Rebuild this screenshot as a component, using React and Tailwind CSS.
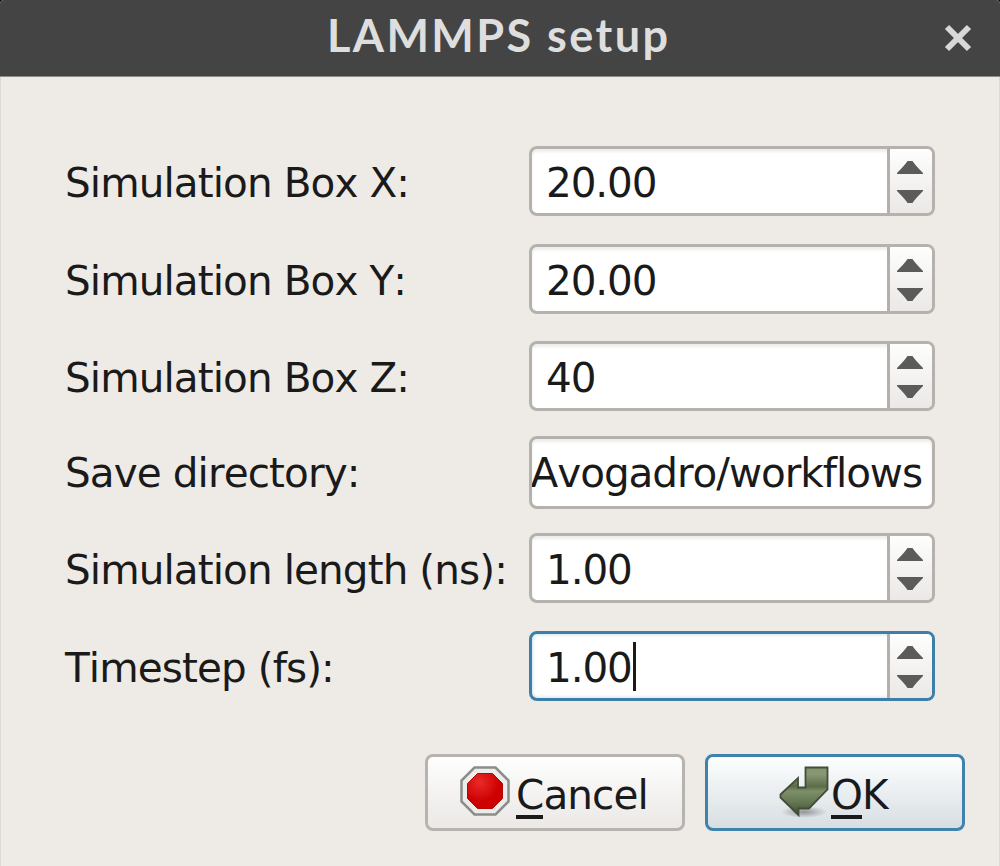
import React from "react";

function Arrows() {
  return (
    <div className="flex w-[45px] shrink-0 flex-col items-center justify-center gap-[16px] border-l-[3px] border-[#b4afaa] bg-linear-to-b from-[#fefefe] to-[#ebe8e6] pt-[2px] pr-[3px]">
      <svg className="block h-[13px] w-[26px]" viewBox="0 0 26 13">
        <path d="M10.500 0h5Q18 4 26 12v1H0v-1Q8 4 10.500 0z" fill="#5b5b5a" />
      </svg>
      <svg className="block h-[13px] w-[26px]" viewBox="0 0 26 13">
        <path d="M10.500 13h5Q18 9 26 1V0H0v1Q8 9 10.500 13z" fill="#5b5b5a" />
      </svg>
    </div>
  );
}

function SpinBox({ value, focused }) {
  return (
    <div
      className={
        "flex h-[70px] w-[406px] overflow-hidden rounded-[8px] border-[3px] bg-white " +
        (focused
          ? "border-[#3d7fa8] shadow-[inset_0_0_4px_#b9d6e6]"
          : "border-[#b5b1ac] shadow-[inset_0_3px_3px_#eeeeee]")
      }
    >
      <div className="flex flex-1 items-center pl-[14px]">
        <span className="relative top-[2px] tracking-[-1.1px] whitespace-nowrap">{value}</span>
        {focused && <span className="ml-[1px] h-[49px] w-[3px] bg-[#1a1a1a]" />}
      </div>
      <Arrows />
    </div>
  );
}

function Row({ label, className, labelClassName = "pt-[4px]", children }) {
  return (
    <div className={"flex items-center justify-between " + className}>
      <span className={"whitespace-nowrap " + labelClassName}>{label}</span>
      {children}
    </div>
  );
}

function StopIcon() {
  return (
    <svg className="block h-[50px] w-[50px]" viewBox="0 0 50 50">
      <defs>
        <radialGradient id="stop" cx="0.35" cy="0.25" r="0.8">
          <stop offset="0" stopColor="#ea2a2a" />
          <stop offset="0.7" stopColor="#cc0000" />
        </radialGradient>
      </defs>
      <path d="M14.500 1.500h21l13 13v21l-13 13h-21l-13-13v-21z" fill="#ececea" stroke="#8b8d89" strokeWidth="2.500" />
      <path d="M17.500 7.500h15l10 10v15l-10 10h-15l-10-10v-15z" fill="url(#stop)" stroke="#b40808" strokeWidth="1" />
    </svg>
  );
}

function ReturnIcon() {
  return (
    <svg className="block h-[52px] w-[52px]" viewBox="0 0 52 52">
      <defs>
        <linearGradient id="ret" x1="0" y1="0" x2="0" y2="1">
          <stop offset="0" stopColor="#879773" />
          <stop offset="0.15" stopColor="#879773" />
          <stop offset="0.4" stopColor="#5b6d4c" />
          <stop offset="0.5" stopColor="#7e9068" />
          <stop offset="0.75" stopColor="#617451" />
          <stop offset="1" stopColor="#3c4d30" />
        </linearGradient>
        <radialGradient id="shade">
          <stop offset="0" stopColor="#000" stopOpacity="0.35" />
          <stop offset="1" stopColor="#000" stopOpacity="0" />
        </radialGradient>
      </defs>
      <ellipse cx="25" cy="46" rx="23" ry="6" fill="url(#shade)" />
      <path d="M26.500 1.500h22v22L30 42.500H19.500V49L1.500 31.500v-3L19 12v9.500h7.500z" fill="url(#ret)" stroke="#434d3a" strokeWidth="1.800" />
    </svg>
  );
}

export default function App() {
  return (
    <div className="h-[866px] w-[1000px] overflow-hidden bg-black">
      <div className="flex h-full w-full flex-col overflow-hidden rounded-t-[4px] bg-[#eeebe6] font-['DejaVu_Sans',sans-serif] text-[40.5px] leading-[48px] tracking-[-0.9px] text-[#1a1a1a] [font-kerning:none]">
        <header className="flex h-[77px] items-center justify-between border-b border-[#8c8b89] bg-[#444444] pr-[28px] pl-[327px]">
          <h1 className="relative top-[-3px] font-['Lato',sans-serif] text-[45px] font-bold tracking-[2.4px] whitespace-nowrap text-[#dedede]">
            LAMMPS setup
          </h1>
          <svg className="block h-[28px] w-[28px]" viewBox="0 0 28 28">
            <path d="M3 3l22 22M25 3L3 25" stroke="#d8d8d8" strokeWidth="6" />
          </svg>
        </header>
        <main className="flex flex-1 flex-col border-x border-[#dddad5] pt-[69px] pr-[64px] pl-[64px]">
          <Row label="Simulation Box X:" className="mb-[28px]"><SpinBox value="20.00" /></Row>
          <Row label="Simulation Box Y:" className="mb-[27px]"><SpinBox value="20.00" /></Row>
          <Row label="Simulation Box Z:" className="mb-[25px]"><SpinBox value="40" /></Row>
          <Row label="Save directory:" className="mb-[24px]" labelClassName="pt-0">
            <div className="flex h-[73px] w-[406px] items-center justify-end overflow-hidden rounded-[8px] border-[3px] border-[#b5b1ac] bg-white pr-[10px] shadow-[inset_0_3px_3px_#eeeeee]">
              <span className="tracking-[-1.05px] whitespace-nowrap">Avogadro/workflows</span>
            </div>
          </Row>
          <Row label="Simulation length (ns):" className="mb-[28px]"><SpinBox value="1.00" /></Row>
          <Row label="Timestep (fs):" className=""><SpinBox value="1.00" focused /></Row>
          <div className="mt-[53px] -mr-[30px] flex justify-end gap-[20px]">
            <button className="flex h-[77px] w-[260px] items-start rounded-[8px] border-[3px] border-[#b7b3ae] bg-linear-to-b from-[#fefefe] to-[#ebe8e6] pt-[9px] pl-[32px]">
              <StopIcon />
              <span className="relative top-[5px] ml-[6px] whitespace-nowrap">
                <span className="inline-block h-[48px] border-b-[4px] border-[#1a1a1a]">C</span>ancel
              </span>
            </button>
            <button className="flex h-[77px] w-[260px] items-start rounded-[8px] border-[3px] border-[#3f82ac] bg-linear-to-b from-[#fdfefe] to-[#d7dee2] pt-[9px] pl-[71px]">
              <ReturnIcon />
              <span className="relative top-[5px] whitespace-nowrap">
                <span className="inline-block h-[48px] border-b-[4px] border-[#1a1a1a]">O</span>K
              </span>
            </button>
          </div>
        </main>
      </div>
    </div>
  );
}
